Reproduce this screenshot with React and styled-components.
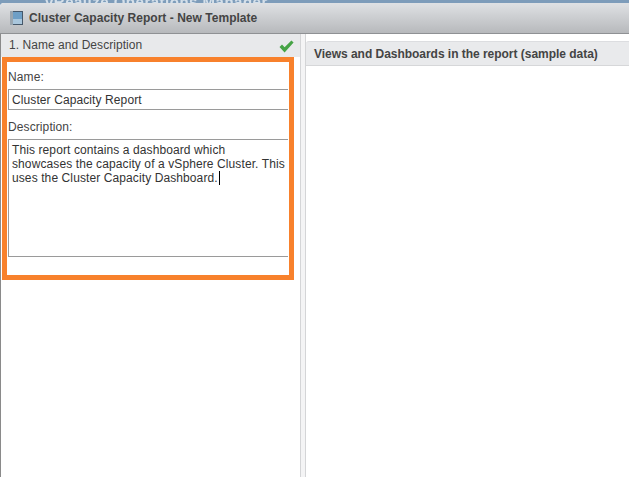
import styled, { createGlobalStyle } from "styled-components";

const GlobalStyle = createGlobalStyle`
  html, body {
    margin: 0;
    padding: 0;
    background: #fff;
  }
  * {
    box-sizing: border-box;
  }
`;

const Page = styled.div`
  width: 629px;
  height: 477px;
  overflow: hidden;
  display: flex;
  flex-direction: column;
  font-family: "Liberation Sans", Arial, sans-serif;
  font-size: 12px;
  color: #333;
  background: #7d9cba;
`;

const BackdropTitle = styled.div`
  height: 3px;
  overflow: hidden;
  padding-left: 45px;
  font-size: 15px;
  line-height: 3px;
  font-weight: bold;
  letter-spacing: 0.5px;
  color: #d5e0ea;
  white-space: nowrap;
  filter: blur(0.5px);
`;

const Dialog = styled.div`
  flex: 1;
  min-height: 0;
  display: flex;
  flex-direction: column;
  background: #fff;
  border-radius: 4px 0 0 0;
  overflow: hidden;
`;

const TitleBar = styled.div`
  height: 31px;
  flex: none;
  display: flex;
  align-items: center;
  gap: 6px;
  padding-left: 10px;
  background: linear-gradient(#dfe1e4, #b7b9bc);
  border-bottom: 1px solid #8f9194;
`;

const TitleText = styled.h1`
  margin: 0;
  font-size: 12px;
  font-weight: bold;
  letter-spacing: 0.03px;
  color: #444;
`;

const Body = styled.div`
  flex: 1;
  min-height: 0;
  display: flex;
  border-left: 1px solid #8a8a8a;
`;

const LeftPanel = styled.div`
  width: 299px;
  flex: none;
  display: flex;
  flex-direction: column;
`;

const StepHeader = styled.div`
  height: 23px;
  flex: none;
  display: flex;
  align-items: center;
  justify-content: space-between;
  padding: 0 6px 2px 8px;
  letter-spacing: 0.05px;
  background: #e8e9eb;
  color: #444;
`;

const CheckSvg = styled.svg`
  margin-top: 4px;
`;

const Highlight = styled.div`
  width: 292px;
  height: 223px;
  margin-left: 1px;
  flex: none;
  display: flex;
  flex-direction: column;
  padding: 8px 0 0 1px;
  letter-spacing: 0.1px;
  border: 5px solid #f8812c;
  background: #fff;
`;

const FieldLabel = styled.label`
  display: block;
  line-height: 14px;
  color: #444;
  margin-bottom: 5px;
`;

const NameInput = styled.div`
  height: 21px;
  width: 280px;
  flex: none;
  display: flex;
  align-items: center;
  padding-left: 3px;
  margin-bottom: 10px;
  border: 1px solid #9a9a9a;
  border-right: none;
  color: #333;
`;

const DescriptionInput = styled.div`
  height: 118px;
  width: 280px;
  flex: none;
  padding: 3px;
  line-height: 14px;
  white-space: nowrap;
  border: 1px solid #9a9a9a;
  border-right: none;
  color: #333;
`;

const Caret = styled.span`
  display: inline-block;
  width: 1px;
  height: 14px;
  margin-left: 1px;
  vertical-align: -3px;
  background: #000;
`;

const Splitter = styled.div`
  width: 6px;
  flex: none;
  background: #f4f4f5;
  border-left: 1px solid #d4d5d7;
  border-right: 1px solid #d4d5d7;
`;

const RightPanel = styled.div`
  flex: 1;
  min-width: 0;
  padding-top: 7px;
  display: flex;
  flex-direction: column;
`;

const PanelHeader = styled.div`
  height: 25px;
  flex: none;
  display: flex;
  align-items: center;
  padding-left: 8px;
  font-weight: bold;
  letter-spacing: -0.03px;
  color: #444;
  background: #e9eaec;
  border-top: 1px solid #dcdde0;
  border-bottom: 1px solid #d6d7d9;
  border-radius: 3px 0 0 0;
`;

function ReportIcon() {
  return (
    <svg width="13" height="14" viewBox="0 0 13 14">
      <rect x="0" y="0" width="13" height="14" fill="#46586a" />
      <rect x="0" y="0" width="3" height="14" fill="#9aa6b0" />
      <rect x="3" y="1" width="9" height="7" fill="#6e9fc6" />
      <rect x="3" y="8" width="9" height="5" fill="#a9c6dc" />
    </svg>
  );
}

function CheckIcon() {
  return (
    <CheckSvg width="15" height="13" viewBox="0 0 15 13">
      <path d="M0.5 7 L3 4.5 L5.6 7.2 L12.4 0.5 L14.6 2.6 L5.6 12.5 Z" fill="#46a346" />
    </CheckSvg>
  );
}

export default function App() {
  return (
    <Page>
      <GlobalStyle />
      <BackdropTitle>vRealize Operations Manager</BackdropTitle>
      <Dialog>
        <TitleBar>
          <ReportIcon />
          <TitleText>Cluster Capacity Report - New Template</TitleText>
        </TitleBar>
        <Body>
          <LeftPanel>
            <StepHeader>
              1. Name and Description
              <CheckIcon />
            </StepHeader>
            <Highlight>
              <FieldLabel>Name:</FieldLabel>
              <NameInput>Cluster Capacity Report</NameInput>
              <FieldLabel>Description:</FieldLabel>
              <DescriptionInput>
                This report contains a dashboard which
                <br />
                showcases the capacity of a vSphere Cluster. This
                <br />
                uses the Cluster Capacity Dashboard.
                <Caret />
              </DescriptionInput>
            </Highlight>
          </LeftPanel>
          <Splitter />
          <RightPanel>
            <PanelHeader>Views and Dashboards in the report (sample data)</PanelHeader>
          </RightPanel>
        </Body>
      </Dialog>
    </Page>
  );
}
